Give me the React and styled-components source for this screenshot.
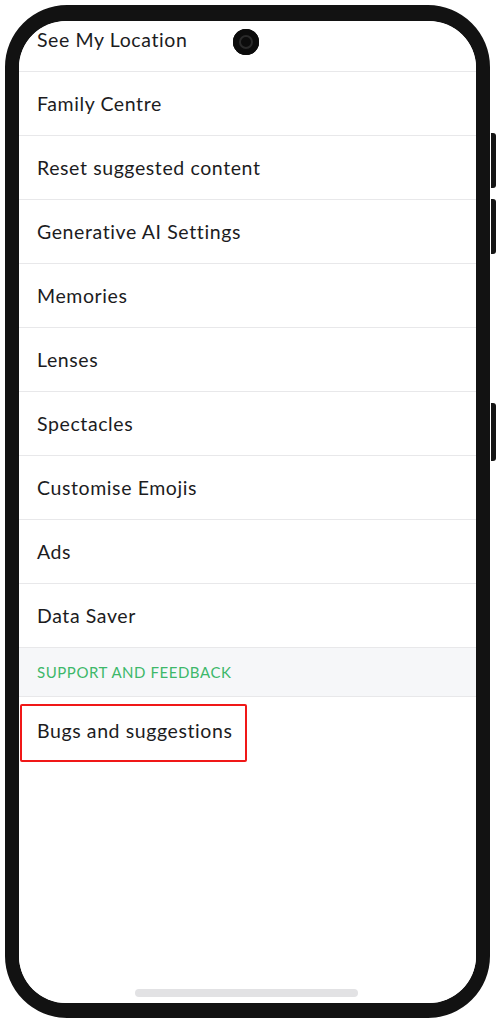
import React from 'react';
import styled, { createGlobalStyle } from 'styled-components';

const GlobalStyle = createGlobalStyle`
  html, body {
    margin: 0;
    padding: 0;
    background: #ffffff;
  }
  body {
    font-family: Lato, "Noto Sans", sans-serif;
  }
`;

const Stage = styled.div`
  width: 497px;
  height: 1024px;
  padding: 5px 0 0 5px;
  box-sizing: border-box;
`;

const Phone = styled.div`
  position: relative;
  width: 485px;
  height: 1013px;
  box-sizing: border-box;
  border: 14px solid #121212;
  border-top-width: 16px;
  border-bottom-width: 15px;
  border-radius: 62px;
  background: #ffffff;
`;

// hardware buttons on the right edge of the device
const ButtonRail = styled.div`
  position: absolute;
  right: -20px;
  top: 112px;
  display: flex;
  flex-direction: column;
  gap: 11px;
`;

const SideButton = styled.div`
  width: 5px;
  height: ${p => p.h}px;
  margin-top: ${p => p.gapAbove || 0}px;
  background: #141414;
  border-radius: 0 3px 3px 0;
`;

const Screen = styled.div`
  position: relative;
  height: 100%;
  border-radius: 47px;
  overflow: hidden;
  background: #ffffff;
`;

const Camera = styled.div`
  position: absolute;
  top: 8px;
  left: 214px;
  width: 26px;
  height: 26px;
  border-radius: 50%;
  background: #0c0c0c;
  box-shadow: inset 0 0 0 6px #0c0c0c, inset 0 0 0 8px #2a2a2a;
  z-index: 2;
`;

const List = styled.div`
  display: flex;
  flex-direction: column;
  margin-top: -13px;
`;

const Row = styled.div`
  display: flex;
  align-items: center;
  height: 64px;
  padding-left: 18px;
  border-bottom: 1px solid #e8e8ea;
  box-sizing: border-box;
  font-size: 19.5px;
  color: #1c1c1e;
  letter-spacing: 0.6px;
`;

const SectionHeader = styled.div`
  display: flex;
  align-items: center;
  height: 49px;
  padding-left: 18px;
  background: #f6f7f9;
  border-bottom: 1px solid #e8e8ea;
  box-sizing: border-box;
  font-size: 15px;
  color: #3db86a;
  letter-spacing: 0.55px;
`;

const HighlightRow = styled.div`
  display: flex;
  align-items: flex-start;
  height: 66px;
  padding: 7px 0 0 1px;
  box-sizing: border-box;
`;

const Highlight = styled.div`
  display: flex;
  align-items: center;
  width: 227px;
  height: 58px;
  padding: 0 0 5px 15px;
  box-sizing: border-box;
  border: 2px solid #f01818;
  border-radius: 2px;
  font-size: 19.5px;
  color: #1c1c1e;
  letter-spacing: 0.6px;
`;

const HomeBar = styled.div`
  position: absolute;
  bottom: 6px;
  left: 116px;
  width: 223px;
  height: 8px;
  border-radius: 4px;
  background: #e2e2e4;
`;

const items = [
  'See My Location',
  'Family Centre',
  'Reset suggested content',
  'Generative AI Settings',
  'Memories',
  'Lenses',
  'Spectacles',
  'Customise Emojis',
  'Ads',
  'Data Saver',
];

export default function App() {
  return (
    <>
      <GlobalStyle />
      <Stage>
        <Phone>
          <ButtonRail>
            <SideButton h={55} />
            <SideButton h={55} />
            <SideButton h={58} gapAbove={138} />
          </ButtonRail>
          <Screen>
            <Camera />
            <List>
              {items.map(label => (
                <Row key={label}>{label}</Row>
              ))}
              <SectionHeader>SUPPORT AND FEEDBACK</SectionHeader>
              <HighlightRow>
                <Highlight>Bugs and suggestions</Highlight>
              </HighlightRow>
            </List>
            <HomeBar />
          </Screen>
        </Phone>
      </Stage>
    </>
  );
}
